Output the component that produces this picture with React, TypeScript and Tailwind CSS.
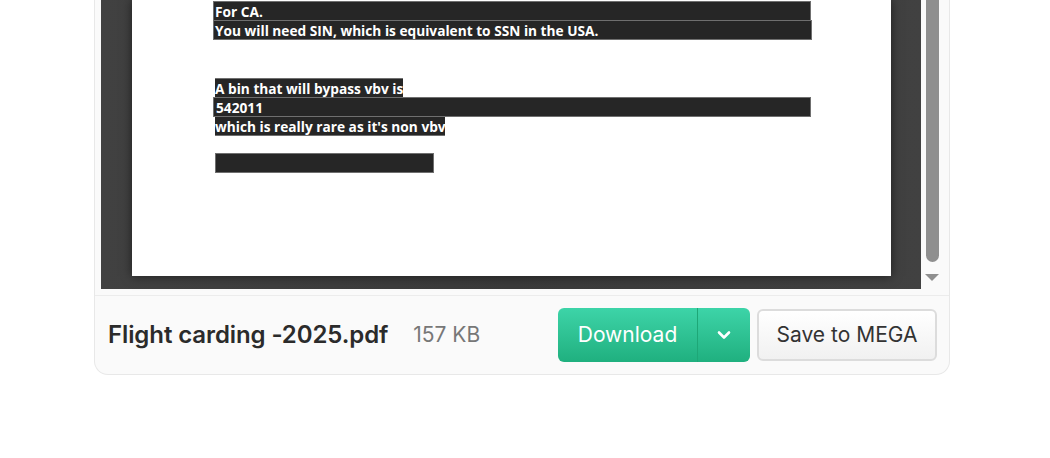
import React from 'react';

const Bar: React.FC<{ className?: string; children?: React.ReactNode }> = ({ className = '', children }) => (
  <div className={`h-[20px] bg-[#262626] border border-[#6f6f6f] text-white font-bold text-[13.7px] leading-[19px] whitespace-nowrap ${className}`}>
    {children}
  </div>
);

const App: React.FC = () => {
  return (
    <div className="w-[1050px] h-[458px] bg-white" style={{ fontFamily: 'Inter, "Liberation Sans", sans-serif' }}>
      <div className="ml-[94px] w-[856px] bg-[#fafafa] border-x border-b border-[#e8e8e8] rounded-b-[14px]">
        <div className="flex pl-[6px] pr-[7px]">
          <div className="flex-1 h-[289px] pl-[31px] pr-[30px] pb-[13px] bg-gradient-to-r from-[#414141] via-[#3a3a3a] to-[#414141]">
            <div
              className="h-full bg-white pt-[1px] pl-[81px] shadow-[0_0_10px_rgba(0,0,0,0.55)]"
              style={{ fontFamily: '"Open Sans", "Noto Sans", sans-serif' }}
            >
              <Bar className="w-[598px] pl-[1px]">For CA.</Bar>
              <Bar className="w-[599px] pl-[1px] -mt-[1px]">You will need SIN, which is equivalent to SSN in the USA.</Bar>
              <div className="h-[38px]" />
              <div className="pl-[2px]">
                <Bar className="w-[188px] border-l-0 border-r-0">A bin that will bypass vbv is</Bar>
                <Bar className="w-[598px] -ml-[2px] pl-[2px] -mt-[1px]">542011</Bar>
                <Bar className="w-[230px] -mt-[1px] border-l-0 border-r-0">which is really rare as it's non vbv</Bar>
                <div className="h-[17px]" />
                <Bar className="w-[219px]" />
              </div>
            </div>
          </div>
          <div className="w-[21px] h-[289px] flex flex-col items-center">
            <div className="w-[13px] h-[262px] bg-[#8f8f8f] rounded-b-[7px] ml-[1px]" />
            <div className="mt-[12px] w-0 h-0 border-l-[7px] border-r-[7px] border-t-[7px] border-l-transparent border-r-transparent border-t-[#8f8f8f] ml-[1px]" />
          </div>
        </div>
        <div className="mt-[6px] border-t border-[#ececec] flex items-center pl-[13px] pr-[12px] pt-[12px] pb-[12px]">
          <span className="text-[24px] font-semibold text-[#2b2b2b] tracking-[-0.1px]">Flight carding -2025.pdf</span>
          <span className="ml-[25px] text-[21px] text-[#777777]">157 KB</span>
          <div className="ml-auto flex items-center gap-[7px]">
            <div className="flex h-[54px] rounded-[6px] overflow-hidden bg-gradient-to-b from-[#3dd4a8] to-[#1fb07f]">
              <div className="w-[139px] flex items-center justify-center text-white text-[21px]">Download</div>
              <div className="w-[1px] bg-[#1ea777]" />
              <div className="w-[52px] flex items-center justify-center">
                <svg width="14" height="10" viewBox="0 0 14 10" fill="none">
                  <path d="M2 2.5L7 7.5L12 2.5" stroke="white" strokeWidth="2.6" strokeLinecap="round" strokeLinejoin="round" />
                </svg>
              </div>
            </div>
            <div className="w-[180px] h-[52px] rounded-[6px] border-2 border-[#dcdcdc] bg-gradient-to-b from-white to-[#f1f1f1] flex items-center justify-center text-[21px] text-[#333333]">
              Save to MEGA
            </div>
          </div>
        </div>
      </div>
    </div>
  );
};

export default App;
